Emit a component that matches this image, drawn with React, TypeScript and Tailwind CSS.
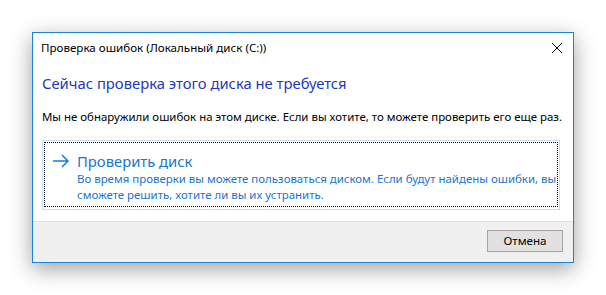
export default function App() {
  return (
    <div className="w-[606px] h-[295px] bg-white pt-[32px] pl-[32px] font-['Noto_Sans',sans-serif]">
      <div className="w-[542px] h-[231px] border border-[#1883d7] bg-white flex flex-col shadow-[0_6px_20px_rgba(0,0,0,0.38)]">
        <div className="h-[30px] flex items-center justify-between pl-[8px] pr-[9px]">
          <span className="text-[11.6px] text-black leading-none">Проверка ошибок (Локальный диск (C:))</span>
          <svg width="12" height="12" viewBox="0 0 12 12" className="mr-[1px]">
            <path d="M1 1 L11 11 M11 1 L1 11" stroke="#000" strokeWidth="1" fill="none" />
          </svg>
        </div>

        <div className="flex-1 flex flex-col pl-[9px] pr-[13px]">
          <h1 className="mt-[9px] h-[22px] leading-[22px] text-[14.8px] text-[#1f3ab8]">
            Сейчас проверка этого диска не требуется
          </h1>
          <p className="mt-[15px] h-[16px] leading-[16px] text-[11.45px] text-black whitespace-nowrap">
            Мы не обнаружили ошибок на этом диске. Если вы хотите, то можете проверить его еще раз.
          </p>
          <button className="mt-[15px] h-[70px] border border-[#c4dff5] p-px pb-[2px] text-left">
            <div className="h-full border border-dotted border-black flex pl-[8px] pt-[8px]">
              <svg width="16" height="14" viewBox="0 0 16 14" className="mt-[3px] shrink-0 text-[#1a7ad6]">
                <path d="M0 7 H15 M9 1 L15 7 L9 13" stroke="currentColor" strokeWidth="1.5" fill="none" />
              </svg>
              <div className="ml-[8px] text-[#1a74d0] whitespace-nowrap">
                <div className="text-[14.8px] leading-[20px]">Проверить диск</div>
                <div className="text-[11.45px] leading-[16px]">
                  Во время проверки вы можете пользоваться диском. Если будут найдены ошибки, вы
                  <br />
                  сможете решить, хотите ли вы их устранить.
                </div>
              </div>
            </div>
          </button>
        </div>

        <div className="h-[41px] border-t border-[#dfdfdf] bg-[#f0f0f0] flex justify-end pt-[8px] pr-[10px]">
          <button className="w-[76px] h-[22px] border border-[#ad9fa6] bg-[#e1e1e1] text-[11.6px] text-black leading-none">
            Отмена
          </button>
        </div>
      </div>
    </div>
  );
}
